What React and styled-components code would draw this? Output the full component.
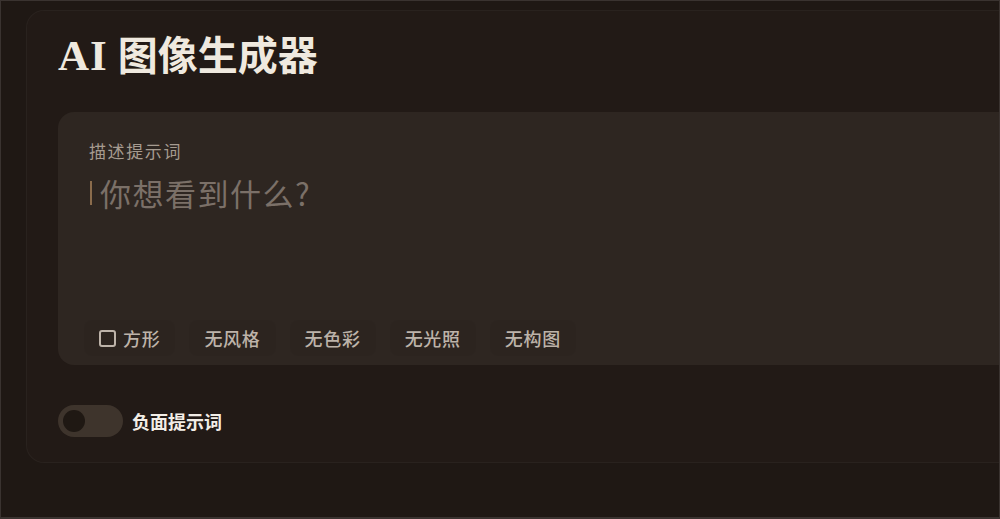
import React from 'react'
import styled, { createGlobalStyle } from 'styled-components'

const GlobalStyle = createGlobalStyle`
  html, body {
    margin: 0;
    padding: 0;
    background: #1e1713;
  }
  * {
    box-sizing: border-box;
  }
`

const cjk = `"Noto Sans CJK SC", "Noto Sans", sans-serif`

const Frame = styled.div`
  width: 1000px;
  height: 519px;
  overflow: hidden;
  background: #1f1814;
  border: 1px solid #3a3330;
  border-bottom-width: 2px;
  padding: 9px 0 0 25px;
`

const Panel = styled.section`
  width: 1100px;
  height: 453px;
  background: #221a16;
  border: 1px solid rgba(255, 255, 255, 0.035);
  border-radius: 18px;
  padding: 20px 0 0 31px;
`

const Title = styled.h1`
  margin: 0;
  height: 50px;
  font-size: 40px;
  line-height: 50px;
  font-weight: 700;
  color: #efe9df;
  font-family: "Liberation Serif", "Noto Sans CJK SC", serif;
`

const Latin = styled.span`
  font-size: 43px;
  letter-spacing: 1px;
`

const PromptCard = styled.div`
  margin-top: 31px;
  height: 253px;
  background: #2e2621;
  border-radius: 16px;
  padding: 27px 0 9px 31px;
  display: flex;
  flex-direction: column;
`

const Label = styled.div`
  font-family: ${cjk};
  font-size: 17px;
  line-height: 24px;
  color: #a69b90;
  letter-spacing: 1.6px;
`

const InputLine = styled.div`
  margin-top: 10px;
  display: flex;
  align-items: center;
  gap: 8px;
`

const Caret = styled.span`
  width: 2px;
  height: 24px;
  background: #8b6c4c;
  margin-left: 1px;
`

const Placeholder = styled.span`
  font-family: ${cjk};
  font-size: 31px;
  line-height: 40px;
  letter-spacing: 1.5px;
  color: #7b7068;
`

const Chips = styled.div`
  margin-top: auto;
  margin-left: -5px;
  display: flex;
  gap: 14px;
`

const Chip = styled.button`
  display: flex;
  align-items: center;
  gap: 7px;
  height: 36px;
  padding: 0 15px;
  border: none;
  border-radius: 8px;
  background: rgba(0, 0, 0, 0.03);
  font-family: ${cjk};
  font-size: 18px;
  font-weight: 500;
  letter-spacing: 0.7px;
  color: #bdb3a9;
`

const SquareIcon = styled.span`
  width: 17px;
  height: 17px;
  border: 2px solid #bdb3a9;
  border-radius: 3px;
`

const ToggleRow = styled.label`
  margin-top: 40px;
  display: flex;
  align-items: center;
  gap: 9px;
`

const Track = styled.span`
  width: 65px;
  height: 32px;
  border-radius: 16px;
  background: #3e342c;
  display: flex;
  align-items: center;
  padding-left: 5px;
`

const Knob = styled.span`
  width: 22px;
  height: 22px;
  border-radius: 50%;
  background: #1f1813;
`

const ToggleText = styled.span`
  font-family: ${cjk};
  font-size: 18px;
  font-weight: 700;
  color: #f2ede6;
`

const options = ['无风格', '无色彩', '无光照', '无构图']

export default function App() {
  return (
    <>
      <GlobalStyle />
      <Frame>
        <Panel>
          <Title>
            <Latin>AI</Latin> 图像生成器
          </Title>
          <PromptCard>
            <Label>描述提示词</Label>
            <InputLine>
              <Caret />
              <Placeholder>你想看到什么?</Placeholder>
            </InputLine>
            <Chips>
              <Chip>
                <SquareIcon />
                方形
              </Chip>
              {options.map((o) => (
                <Chip key={o}>{o}</Chip>
              ))}
            </Chips>
          </PromptCard>
          <ToggleRow>
            <Track>
              <Knob />
            </Track>
            <ToggleText>负面提示词</ToggleText>
          </ToggleRow>
        </Panel>
      </Frame>
    </>
  )
}
